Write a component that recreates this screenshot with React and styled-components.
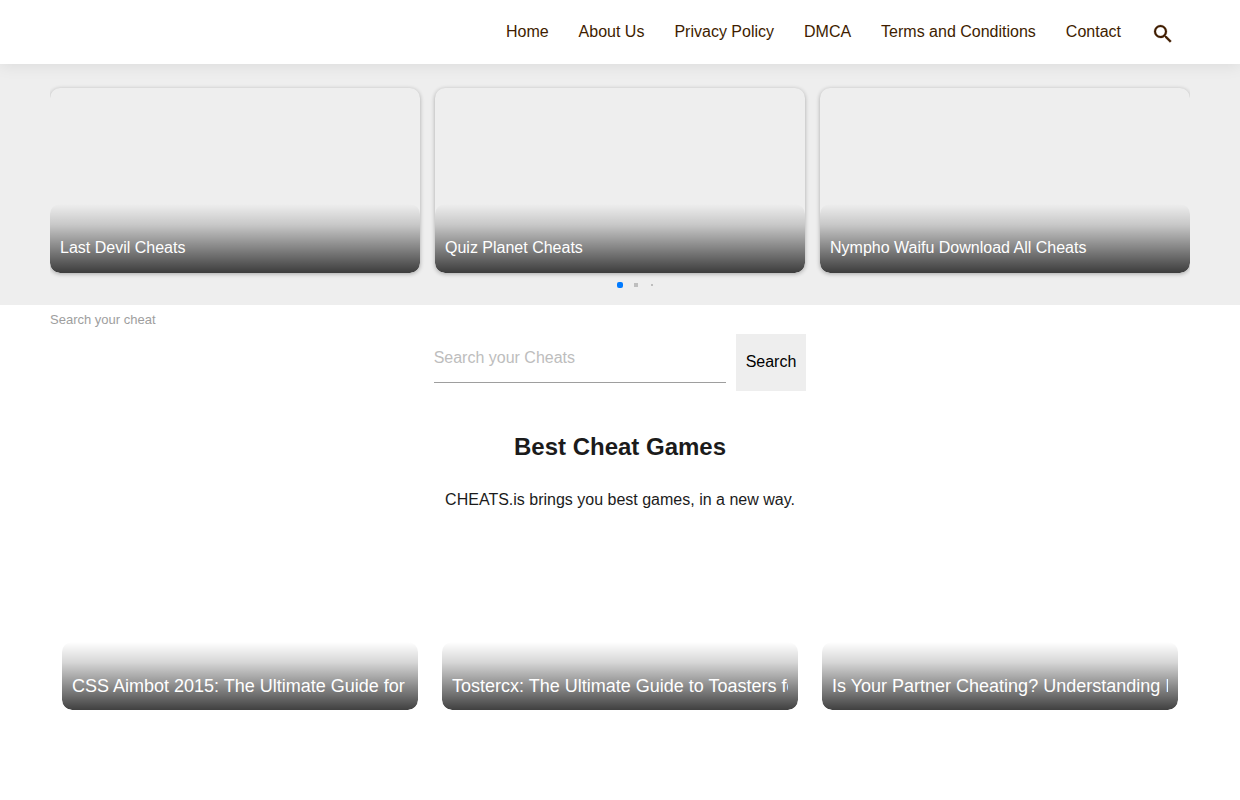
import React, { useState } from 'react';
import styled, { createGlobalStyle } from 'styled-components';

const slides = [
  'Last Devil Cheats',
  'Quiz Planet Cheats',
  'Nympho Waifu Download All Cheats'
];

const posts = [
  'CSS Aimbot 2015: The Ultimate Guide for',
  'Tostercx: The Ultimate Guide to Toasters for',
  'Is Your Partner Cheating? Understanding Infidelity'
];

const links = [
  'Home',
  'About Us',
  'Privacy Policy',
  'DMCA',
  'Terms and Conditions',
  'Contact'
];

const GlobalStyle = createGlobalStyle`
  * {
    box-sizing: border-box;
  }

  body {
    margin: 0;
    background: #fff;
    color: #1b1b1b;
    font-family: 'Liberation Sans', Arial, sans-serif;
    font-size: 16px;
    line-height: 24px;
  }
`;

const Header = styled.header`
  position: relative;
  z-index: 1;
  height: 64px;
  padding: 0 56px;
  background: #fff;
  box-shadow: 0 2px 15px rgba(0, 0, 0, 0.08);
  display: flex;
  align-items: center;
  justify-content: flex-end;
`;

const Nav = styled.nav`
  display: flex;
  gap: 30px;
`;

const NavLink = styled.a`
  color: #401d00;
  text-decoration: none;
`;

const IconButton = styled.button`
  margin-left: 20px;
  width: 43px;
  height: 42px;
  padding: 0;
  border: 0;
  background: none;
  color: #401d00;
  cursor: pointer;
  display: flex;
  align-items: center;
  justify-content: center;

  svg {
    width: 24px;
    height: 24px;
    margin-top: 4px;
    stroke: currentColor;
    stroke-width: 0.25;
  }
`;

const Carousel = styled.section`
  padding: 8px 50px 16px;
  background: #eee;
`;

const Slides = styled.div`
  display: grid;
  grid-template-columns: repeat(3, 1fr);
  gap: 15px;
  padding: 16px 0 8px;
  overflow: hidden;
`;

const Slide = styled.a`
  height: 185px;
  border-radius: 10px;
  box-shadow: 0 1px 4px rgba(0, 0, 0, 0.3);
  overflow: hidden;
  text-decoration: none;
  display: flex;
  align-items: flex-end;
`;

const Caption = styled.div`
  width: 100%;
  padding: ${({ $large }) => ($large ? '30px 10px 10px' : '32px 10px 13px')};
  border-radius: 10px;
  background: linear-gradient(
    transparent,
    rgba(0, 0, 0, 0.16) 30%,
    rgba(0, 0, 0, 0.75)
  );
  color: #fff;
  font-size: ${({ $large }) => ($large ? '18px' : '16px')};
  line-height: ${({ $large }) => ($large ? '28px' : '24px')};
`;

const CaptionText = styled.div`
  overflow: hidden;
  white-space: nowrap;
`;

const Bullets = styled.div`
  height: 8px;
  padding-left: 32px;
  display: flex;
  align-items: center;
  justify-content: center;
`;

const Bullet = styled.span`
  width: 16px;
  display: flex;
  justify-content: center;

  &::before {
    content: '';
    width: ${({ $size }) => $size}px;
    height: ${({ $size }) => $size}px;
    border-radius: ${({ $active }) => ($active ? '2px' : 0)};
    background: ${({ $active }) => ($active ? '#007aff' : '#bebebe')};
  }
`;

const SearchArea = styled.section`
  padding: 5px 50px 0;
`;

const SearchLabel = styled.label`
  display: block;
  color: #9e9e9e;
  font-size: 13px;
  line-height: 20px;
`;

const SearchForm = styled.form`
  margin-top: 4px;
  display: flex;
  justify-content: center;
  align-items: flex-start;
  gap: 10px;
`;

const SearchInput = styled.input`
  width: 292px;
  height: 49px;
  padding: 0;
  border: 0;
  border-bottom: 1px solid #9e9e9e;
  outline: 0;
  background: none;
  font: inherit;

  &::placeholder {
    color: #bdbdbd;
  }
`;

const SearchButton = styled.button`
  height: 57px;
  padding: 0 10px 2px;
  border: 0;
  background: #eee;
  color: #000;
  font: inherit;
  cursor: pointer;
`;

const Intro = styled.section`
  padding-top: 38px;
  text-align: center;
`;

const Title = styled.h1`
  margin: 0;
  font-size: 24px;
  line-height: 36px;
`;

const Text = styled.p`
  margin: 23px 0 0;
`;

const Posts = styled.section`
  padding: 18px 62px 90px;
  display: grid;
  grid-template-columns: repeat(3, 1fr);
  gap: 24px;
`;

const Post = styled.a`
  min-width: 0;
  height: 180px;
  border-radius: 10px;
  overflow: hidden;
  text-decoration: none;
  display: flex;
  align-items: flex-end;
`;

const SearchIcon = () => (
  <svg viewBox="0 0 24 24" fill="currentColor" aria-hidden="true">
    <path d="M15.5 14h-.79l-.28-.27A6.471 6.471 0 0 0 16 9.5 6.5 6.5 0 1 0 9.5 16c1.61 0 3.09-.59 4.23-1.57l.27.28v.79l5 4.99L20.49 19l-4.99-5zm-6 0C7.01 14 5 11.99 5 9.5S7.01 5 9.5 5 14 7.01 14 9.5 11.99 14 9.5 14z" />
  </svg>
);

export default function App() {
  const [query, setQuery] = useState('');

  return (
    <>
      <GlobalStyle />
      <Header>
        <Nav>
          {links.map(link => (
            <NavLink href="#" key={link}>
              {link}
            </NavLink>
          ))}
        </Nav>
        <IconButton type="button" aria-label="Search">
          <SearchIcon />
        </IconButton>
      </Header>
      <Carousel>
        <Slides>
          {slides.map(title => (
            <Slide href="#" key={title}>
              <Caption>
                <CaptionText>{title}</CaptionText>
              </Caption>
            </Slide>
          ))}
        </Slides>
        <Bullets>
          <Bullet $size={6} $active />
          <Bullet $size={4} />
          <Bullet $size={2} />
        </Bullets>
      </Carousel>
      <SearchArea>
        <SearchLabel htmlFor="cheat">Search your cheat</SearchLabel>
        <SearchForm onSubmit={e => e.preventDefault()}>
          <SearchInput
            id="cheat"
            type="text"
            placeholder="Search your Cheats"
            value={query}
            onChange={e => setQuery(e.target.value)}
          />
          <SearchButton type="submit">Search</SearchButton>
        </SearchForm>
      </SearchArea>
      <Intro>
        <Title>Best Cheat Games</Title>
        <Text>CHEATS.is brings you best games, in a new way.</Text>
      </Intro>
      <Posts>
        {posts.map(title => (
          <Post href="#" key={title}>
            <Caption $large>
              <CaptionText>{title}</CaptionText>
            </Caption>
          </Post>
        ))}
      </Posts>
    </>
  );
}
